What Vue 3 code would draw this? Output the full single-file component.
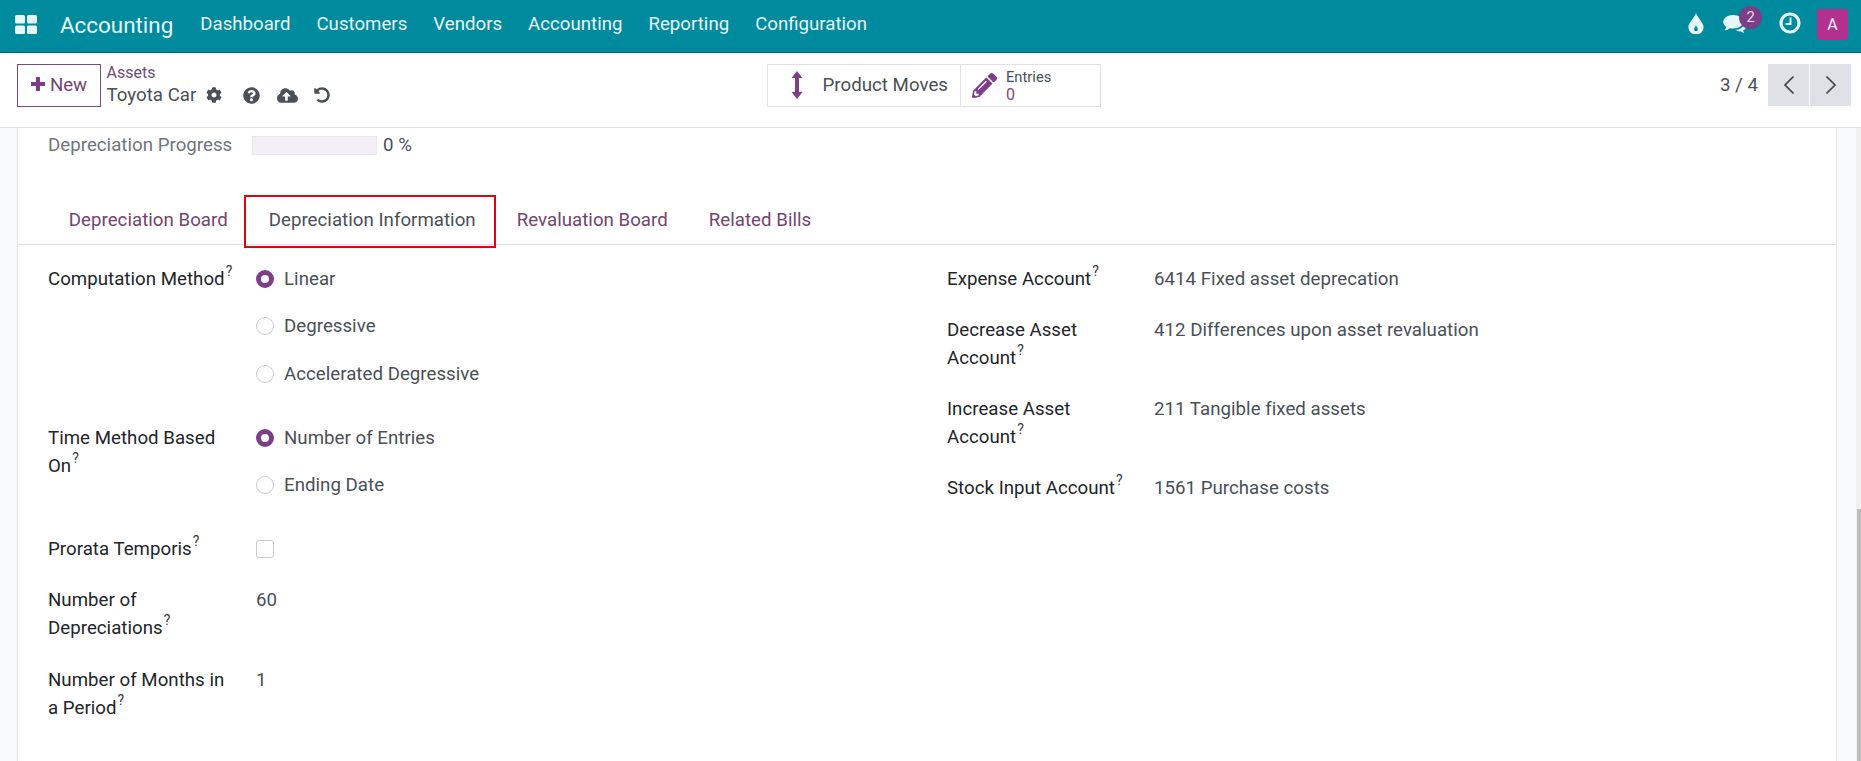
<template>
  <div class="app">
    <header class="navbar">
      <svg class="apps" viewBox="0 0 22 19"><rect x="0" y="0" width="10" height="8.5" rx="1.5"/><rect x="12" y="0" width="10" height="8.5" rx="1.5"/><rect x="0" y="10.5" width="10" height="8.5" rx="1.5"/><rect x="12" y="10.5" width="10" height="8.5" rx="1.5"/></svg>
      <span class="brand">Accounting</span>
      <nav class="menu"><a v-for="m in menu" :key="m">{{ m }}</a></nav>
      <div class="systray">
        <svg class="drop" viewBox="0 0 16 22"><path d="M8 0C6.500 5 0 10 0 15a8 7.500 0 0 0 16 0C16 10 9.500 5 8 0z" fill="#e6f7f9"/><path d="M8 12.500C7.500 14.500 6 15.500 6 17a2 2 0 0 0 4 0c0-1.500-1.500-2.500-2-4.500z" fill="#008a9e"/></svg>
        <div class="chat">
          <svg viewBox="0 0 26 22"><path d="M11 1C4.900 1 0 4.400 0 8.600c0 2.200 1.300 4.100 3.400 5.500C3 15.800 2 17 1.200 18c2.400-.2 4.700-1.200 6.300-2.400 1.100.3 2.300.4 3.500.4 6.100 0 11-3.300 11-7.400S17.100 1 11 1z" fill="#e6f7f9"/><path d="M23.500 9c.1 4.500-4.300 8-10 8.600 1.200 1 2.900 1.600 4.700 1.600l1.100-.1c1 .8 2.300 1.600 4 1.900-.6-.8-1.100-1.700-1.300-2.800 2-.9 3-2.400 3-4.200 0-1.900-.8-3.600-1.500-5z" fill="#e6f7f9"/></svg>
          <span class="badge">2</span>
        </div>
        <svg class="clock" viewBox="0 0 22 22"><circle cx="11" cy="11" r="9" fill="none" stroke="#e6f7f9" stroke-width="3.200"/><path d="M11.500 5.500v6.500H6.500" fill="none" stroke="#e6f7f9" stroke-width="2"/></svg>
        <span class="avatar">A</span>
      </div>
    </header>

    <section class="control">
      <div class="cp-left">
        <button class="new"><svg viewBox="0 0 14 14"><path d="M5 0h4v5h5v4H9v5H5V9H0V5h5z"/></svg><span>New</span></button>
        <div class="crumbs">
          <a class="assets">Assets</a>
          <div class="title-row">
            <span class="title">Toyota Car</span>
            <svg class="ic gear" viewBox="0 0 512 512"><path d="M487.400 315.700l-42.600-24.600c4.300-23.200 4.300-47 0-70.200l42.600-24.600c4.900-2.800 7.100-8.600 5.500-14-11.100-35.600-30-67.800-54.700-94.600-3.800-4.100-10-5.100-14.800-2.300L380.800 110c-17.900-15.400-38.500-27.300-60.800-35.100V25.800c0-5.600-3.900-10.500-9.400-11.700-36.700-8.200-74.300-7.800-109.200 0-5.500 1.200-9.400 6.100-9.400 11.700V75c-22.200 7.900-42.800 19.800-60.800 35.100L88.700 85.500c-4.900-2.800-11-1.900-14.800 2.300-24.700 26.700-43.600 58.900-54.700 94.600-1.700 5.400.6 11.200 5.500 14L67.300 221c-4.300 23.200-4.300 47 0 70.200l-42.600 24.600c-4.900 2.800-7.100 8.600-5.500 14 11.100 35.600 30 67.800 54.700 94.600 3.800 4.100 10 5.100 14.800 2.300l42.600-24.600c17.900 15.400 38.500 27.300 60.800 35.100v49.200c0 5.600 3.900 10.500 9.400 11.700 36.700 8.200 74.300 7.800 109.200 0 5.500-1.200 9.400-6.100 9.400-11.700v-49.200c22.200-7.900 42.800-19.800 60.800-35.100l42.600 24.600c4.900 2.800 11 1.900 14.800-2.300 24.700-26.700 43.600-58.900 54.700-94.600 1.500-5.500-.7-11.300-5.600-14.100zM256 336c-44.100 0-80-35.900-80-80s35.900-80 80-80 80 35.900 80 80-35.900 80-80 80z"/></svg>
            <svg class="ic help" viewBox="0 0 512 512"><path d="M504 256c0 136.997-111.043 248-248 248S8 392.997 8 256C8 119.083 119.043 8 256 8s248 111.083 248 248zM262.655 90c-54.497 0-89.255 22.957-116.549 63.758-3.536 5.286-2.353 12.415 2.715 16.258l34.699 26.310c5.205 3.947 12.621 3.008 16.665-2.122 17.864-22.658 30.113-35.797 57.303-35.797 20.429 0 45.698 13.148 45.698 32.958 0 14.976-12.363 22.667-32.534 33.976C247.128 238.528 216 254.941 216 296v4c0 6.627 5.373 12 12 12h56c6.627 0 12-5.373 12-12v-1.333c0-28.462 83.186-29.647 83.186-106.667 0-58.002-60.165-102-116.531-102zM256 338c-25.365 0-46 20.635-46 46 0 25.364 20.635 46 46 46s46-20.636 46-46c0-25.365-20.635-46-46-46z"/></svg>
            <svg class="ic cloud" viewBox="0 0 640 512"><path d="M537.600 226.600c4.100-10.700 6.400-22.400 6.400-34.600 0-53-43-96-96-96-19.700 0-38.100 6-53.300 16.200C367 64.200 315.300 32 256 32c-88.400 0-160 71.600-160 160 0 2.700.1 5.400.2 8.100C40.200 219.800 0 273.200 0 336c0 79.500 64.500 144 144 144h368c70.700 0 128-57.300 128-128 0-61.900-44-113.600-102.400-125.400zM393.400 288H328v112c0 8.800-7.200 16-16 16h-48c-8.800 0-16-7.200-16-16V288h-65.400c-14.300 0-21.400-17.200-11.300-27.300l105.400-105.400c6.200-6.200 16.400-6.200 22.600 0l105.400 105.400c10.100 10.100 2.900 27.300-11.300 27.300z"/></svg>
            <svg class="ic undo" viewBox="0 0 512 512"><path d="M255.545 8c-66.269.119-126.438 26.233-170.860 68.685L48.971 40.971C33.851 25.851 8 36.559 8 57.941V192c0 13.255 10.745 24 24 24h134.059c21.382 0 32.090-25.851 16.971-40.971l-41.750-41.750c30.864-28.899 70.801-44.907 113.230-45.273 92.398-.798 170.283 73.977 169.484 169.442C423.236 348.009 349.816 424 256 424c-41.127 0-79.997-14.678-110.630-41.556-4.743-4.161-11.906-3.908-16.368.553L89.340 422.659c-4.872 4.872-4.631 12.815.482 17.433C133.798 479.813 192.074 504 256 504c136.966 0 247.999-111.033 248-247.998C504.001 119.193 392.354 7.755 255.545 8z"/></svg>
          </div>
        </div>
      </div>
      <div class="stats">
        <div class="stat moves">
          <svg viewBox="0 0 12 28"><path d="M6 0l5.500 7H8v14h3.500L6 28 .5 21H4V7H.5z"/></svg>
          <span>Product Moves</span>
        </div>
        <div class="stat entries">
          <svg viewBox="0 0 512 512"><path d="M497.900 142.100l-46.100 46.100c-4.700 4.700-12.300 4.700-17 0l-111-111c-4.700-4.700-4.700-12.300 0-17l46.100-46.100c18.700-18.700 49.100-18.700 67.900 0l60.100 60.100c18.800 18.700 18.800 49.100 0 67.900zM284.200 99.800L21.600 362.400.4 483.900c-2.900 16.400 11.400 30.600 27.800 27.800l121.500-21.300 262.600-262.600c4.700-4.700 4.700-12.300 0-17l-111-111c-4.800-4.700-12.400-4.700-17.100 0zM124.100 339.900c-5.500-5.500-5.500-14.300 0-19.800l154-154c5.500-5.500 14.300-5.500 19.800 0s5.500 14.300 0 19.800l-154 154c-5.500 5.500-14.300 5.500-19.800 0zM88 424h48v36.300l-64.500 11.300-31.100-31.100L51.700 376H88v48z"/></svg>
          <div class="stat-text"><span>Entries</span><b>0</b></div>
        </div>
      </div>
      <div class="pager">
        <span class="count">3 / 4</span>
        <button><svg viewBox="0 0 12 20"><path d="M10.500 1.500L2 10l8.500 8.500"/></svg></button>
        <button><svg viewBox="0 0 12 20"><path d="M1.500 1.500L10 10l-8.500 8.500"/></svg></button>
      </div>
    </section>

    <main class="content">
      <article class="sheet">
        <div class="progress-row">
          <span class="progress-label">Depreciation Progress</span>
          <span class="bar"></span>
          <span class="pct">0 %</span>
        </div>
        <div class="tabs">
          <a v-for="t in tabs" :key="t" class="tab" :class="{ active: t === 'Depreciation Information' }">{{ t }}</a>
        </div>
        <div class="form">
          <div class="col left">
            <div class="row">
              <label>Computation Method<sup>?</sup></label>
              <div class="radios">
                <div v-for="r in methods" :key="r.t" class="radio"><i :class="{ on: r.on }"></i>{{ r.t }}</div>
              </div>
            </div>
            <div class="row">
              <label>Time Method Based On<sup>?</sup></label>
              <div class="radios">
                <div v-for="r in times" :key="r.t" class="radio"><i :class="{ on: r.on }"></i>{{ r.t }}</div>
              </div>
            </div>
            <div class="row">
              <label>Prorata Temporis<sup>?</sup></label>
              <div class="check-wrap"><span class="check"></span></div>
            </div>
            <div class="row">
              <label>Number of Depreciations<sup>?</sup></label>
              <div class="val">60</div>
            </div>
            <div class="row">
              <label>Number of Months in a Period<sup>?</sup></label>
              <div class="val">1</div>
            </div>
          </div>
          <div class="col right">
            <div v-for="a in accounts" :key="a.l" class="row">
              <label>{{ a.l }}<sup>?</sup></label>
              <div class="val">{{ a.v }}</div>
            </div>
          </div>
        </div>
      </article>
      <div class="scroll"><span class="thumb"></span></div>
    </main>
  </div>
</template>

<script setup>
const menu = ['Dashboard', 'Customers', 'Vendors', 'Accounting', 'Reporting', 'Configuration']
const tabs = ['Depreciation Board', 'Depreciation Information', 'Revaluation Board', 'Related Bills']
const methods = [
  { t: 'Linear', on: true },
  { t: 'Degressive', on: false },
  { t: 'Accelerated Degressive', on: false }
]
const times = [
  { t: 'Number of Entries', on: true },
  { t: 'Ending Date', on: false }
]
const accounts = [
  { l: 'Expense Account', v: '6414 Fixed asset deprecation' },
  { l: 'Decrease Asset Account', v: '412 Differences upon asset revaluation' },
  { l: 'Increase Asset Account', v: '211 Tangible fixed assets' },
  { l: 'Stock Input Account', v: '1561 Purchase costs' }
]
</script>

<style>
html, body { margin: 0; height: 100%; overflow: hidden; background: #fff; }
</style>

<style scoped>
.app { width: 1861px; height: 761px; display: flex; flex-direction: column; font-family: Roboto, "Liberation Sans", sans-serif; font-size: 18.67px; line-height: 28px; letter-spacing: .03px; color: #495057; overflow: hidden; }

.navbar { flex: 0 0 53px; box-sizing: border-box; background: #008a9e; border-bottom: 1px solid #056674; display: flex; align-items: center; color: #e6f7f9; letter-spacing: 0; }
.apps { width: 22px; height: 19px; margin: -4px 0 0 15px; fill: #e6f7f9; }
.brand { font-size: 22.4px; margin: -2px 0 0 23px; }
.menu { display: flex; margin: -5px 0 0 14px; }
.menu a { padding: 0 13px; }
.systray { margin: -4px 0 0 auto; display: flex; align-items: center; padding-right: 13px; }
.drop { width: 16px; height: 21px; margin-top: -2px; }
.chat { position: relative; width: 24px; height: 20px; margin: 0 0 0 19px; }
.chat svg { width: 24px; height: 20px; display: block; }
.badge { position: absolute; left: 16px; top: -8px; width: 23px; height: 23px; border-radius: 50%; background: #7b3f87; color: #e8dcec; font-size: 14.67px; line-height: 22px; text-align: center; }
.clock { width: 22px; height: 22px; margin: -2px 0 0 32px; }
.avatar { width: 31px; height: 31px; margin-left: 16px; border-radius: 3px; background: #b3308f; color: #fbeef8; font-size: 16px; line-height: 31px; text-align: center; }

.control { flex: 0 0 75px; box-sizing: border-box; border-bottom: 1px solid #dee2e6; display: flex; align-items: flex-start; padding-top: 11px; background: #fff; }
.cp-left { flex: 0 0 767px; box-sizing: border-box; padding-left: 17px; display: flex; }
.new { width: 84px; height: 43px; box-sizing: border-box; border: 1px solid #7c4a80; background: #fff; color: #71456f; font: inherit; padding: 0 0 2px; display: flex; align-items: center; justify-content: center; gap: 5px; }
.new svg { width: 14px; height: 14px; fill: #7c3f87; margin-top: -1px; }
.crumbs { margin-left: 5.500px; margin-top: -2px; }
.assets { display: block; color: #714b75; font-size: 16px; line-height: 22px; }
.title-row { display: flex; align-items: center; height: 28px; margin-top: -3px; }
.title { width: 99px; }
.ic { fill: #495057; height: 16px; flex: none; }
.gear { width: 16px; }
.help { width: 17px; height: 17px; margin-left: 21.500px; }
.cloud { width: 21px; height: 17px; margin-left: 16.500px; }
.undo { width: 16px; margin-left: 16px; }

.stats { display: flex; height: 43px; box-sizing: border-box; border: 1px solid #dee2e6; width: 334px; }
.stat { display: flex; align-items: center; box-sizing: border-box; height: 100%; }
.moves { width: 193px; border-right: 1px solid #dee2e6; padding-bottom: 2px; }
.moves svg { width: 12px; height: 28px; margin: 1px 0 0 22.500px; fill: #7c3f87; }
.moves span { margin-left: 20px; }
.entries svg { width: 25px; height: 25px; margin-left: 11px; fill: #7c3f87; }
.stat-text { display: flex; flex-direction: column; margin-left: 9px; font-size: 14.67px; line-height: 17px; }
.stat-text b { font-weight: 400; color: #7c4a80; font-size: 16px; }

.pager { margin-left: auto; display: flex; align-items: center; height: 42px; padding-right: 10px; }
.count { margin-right: 9px; }
.pager button { width: 41px; height: 42px; border: 0; margin-left: 1px; padding: 0; background: #dee1e5; display: flex; align-items: center; justify-content: center; }
.pager svg { width: 12px; height: 20px; fill: none; stroke: #3f4448; stroke-width: 1.700; }

.content { flex: 1; min-height: 0; display: flex; background: #f9fafb; padding-left: 17px; }
.sheet { flex: 0 0 1820px; box-sizing: border-box; background: #fff; border-left: 1px solid #dee2e6; border-right: 1px solid #dee2e6; margin-right: 19px; }
.progress-row { display: flex; align-items: center; height: 28px; margin-top: 3px; padding-left: 30px; }
.progress-label { width: 204px; color: #6f767c; }
.bar { width: 125px; height: 19px; box-sizing: border-box; background: #f4eff6; border: 1px solid #ebe7ee; }
.pct { margin-left: 6px; }

.tabs { margin-top: 36px; height: 50px; box-sizing: border-box; border-bottom: 1px solid #dee2e6; display: flex; padding-left: 30.300px; }
.tab { height: 50px; box-sizing: border-box; padding: 11px 20.500px; color: #71456f; }
.tab.active { color: #495057; position: relative; }
.tab.active::after { content: ""; position: absolute; left: -4px; right: 0; top: 0; height: 53px; box-sizing: border-box; border: 2px solid #d9080f; }

.form { display: flex; padding: 20px 0 0 30px; }
.col { display: flex; flex-direction: column; gap: 23.330px; }
.left { width: 899px; }
.right { width: 600px; gap: 23px; }
.row { display: flex; align-items: flex-start; }
.row label { flex: none; color: #212529; box-sizing: border-box; padding-right: 20px; }
.left label { width: 208px; }
.right label { width: 207px; padding-right: 15px; }
sup { font-size: 14px; line-height: 0; vertical-align: baseline; position: relative; top: -9px; margin-left: 1px; color: #343a40; }
.radios { display: flex; flex-direction: column; gap: 19.300px; padding-bottom: 12.700px; }
.radio { display: flex; align-items: center; height: 28px; }
.radio i { width: 18px; height: 18px; box-sizing: border-box; border-radius: 50%; border: 1px solid #c9ccd0; margin-right: 10px; background: #fff; }
.radio i.on { border: 5px solid #7c3f87; }
.check-wrap { height: 28px; display: flex; align-items: center; }
.check { width: 18px; height: 18px; box-sizing: border-box; border: 1px solid #c9ccd0; border-radius: 3px; }

.scroll { flex: 0 0 5px; background: #f0f0f0; display: flex; flex-direction: column; justify-content: flex-end; }
.thumb { height: 252px; margin-left: 1px; background: #bdbdbd; }
</style>
